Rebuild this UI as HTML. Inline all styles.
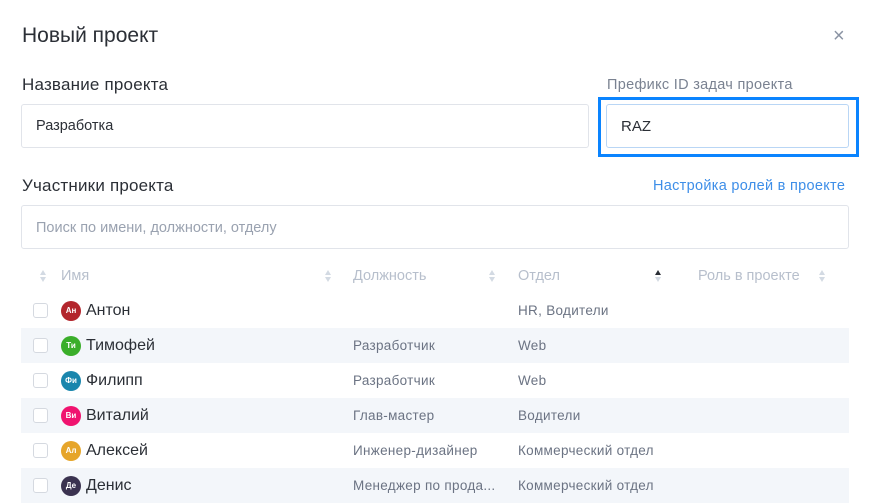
<!DOCTYPE html>
<html><head><meta charset="utf-8"><style>
*{box-sizing:border-box;margin:0;padding:0}
body{width:870px;height:502px;overflow:hidden;background:#fff;font-family:"Liberation Sans","DejaVu Sans",sans-serif;color:#2b2f36;position:relative}
.a{position:absolute;white-space:nowrap}
.inp{position:absolute;border:1px solid #e1e4ea;border-radius:3px;background:#fff}
.row{position:absolute;left:21px;width:828px;height:35px}
.row.s{background:#f3f6fa}
.cb{position:absolute;left:12px;top:10px;width:15px;height:15px;border:1px solid #d5d9e0;border-radius:3px;background:#fff}
.av{position:absolute;left:40px;top:8px;width:20px;height:20px;border-radius:50%;color:#fff;font-size:8px;font-weight:bold;text-align:center;line-height:20px}
.nm{position:absolute;left:65px;top:9px;font-size:16px;color:#2b2f36}
.c{position:absolute;top:10px;font-size:13.5px;letter-spacing:0.3px;color:#6b7383}
.h{position:absolute;top:268px;font-size:14.5px;color:#b7bfcc}
.sort{position:absolute;width:7px;height:12px}
.sort:before,.sort:after{content:"";position:absolute;left:0;border-left:3.5px solid transparent;border-right:3.5px solid transparent}
.sort:before{top:0;border-bottom:5px solid #d3dae3}
.sort:after{top:7px;border-top:5px solid #d3dae3}
.sort.up:before{border-bottom-color:#2b2f36}
</style></head><body>
<div class="a" style="left:22px;top:24px;font-size:21px;color:#2b2f36">Новый проект</div>
<div class="a" style="left:833px;top:25px;font-size:20px;color:#8a93a3">×</div>
<div class="a" style="left:22px;top:75px;font-size:17px;letter-spacing:0.2px">Название проекта</div>
<div class="a" style="left:607px;top:77px;font-size:14.5px;letter-spacing:0.3px;color:#7a8291">Префикс ID задач проекта</div>
<div class="inp" style="left:21px;top:104px;width:568px;height:44px"></div>
<div class="a" style="left:36px;top:118px;font-size:14.5px">Разработка</div>
<div style="position:absolute;left:598px;top:97px;width:261px;height:60px;border:3px solid #0a84ff"></div>
<div class="inp" style="left:606px;top:104px;width:243px;height:44px;border-color:#b9d6f5"></div>
<div class="a" style="left:621px;top:118px;font-size:15px">RAZ</div>
<div class="a" style="left:22px;top:176px;font-size:17px;letter-spacing:0.2px">Участники проекта</div>
<div class="a" style="left:653px;top:178px;font-size:14.5px;letter-spacing:0.3px;color:#3d8ee8">Настройка ролей в проекте</div>
<div class="inp" style="left:21px;top:205px;width:828px;height:44px"></div>
<div class="a" style="left:36px;top:220px;font-size:14.5px;color:#9aa2b0">Поиск по имени, должности, отделу</div>
<div class="sort" style="left:40px;top:270px"></div><div class="h" style="left:61px">Имя</div>
<div class="sort" style="left:325px;top:270px"></div><div class="h" style="left:353px">Должность</div>
<div class="sort" style="left:489px;top:270px"></div><div class="h" style="left:518px">Отдел</div>
<div class="sort up" style="left:655px;top:270px"></div><div class="h" style="left:698px">Роль в проекте</div>
<div class="sort" style="left:819px;top:270px"></div>

<div class="row" style="top:293px"><div class="cb"></div><div class="av" style="background:#b3262d">Ан</div><div class="nm">Антон</div><div class="c" style="left:497px">HR, Водители</div></div>
<div class="row s" style="top:328px"><div class="cb"></div><div class="av" style="background:#3aae2a">Ти</div><div class="nm">Тимофей</div><div class="c" style="left:332px">Разработчик</div><div class="c" style="left:497px">Web</div></div>
<div class="row" style="top:363px"><div class="cb"></div><div class="av" style="background:#1a86ad">Фи</div><div class="nm">Филипп</div><div class="c" style="left:332px">Разработчик</div><div class="c" style="left:497px">Web</div></div>
<div class="row s" style="top:398px"><div class="cb"></div><div class="av" style="background:#f0136f">Ви</div><div class="nm">Виталий</div><div class="c" style="left:332px">Глав-мастер</div><div class="c" style="left:497px">Водители</div></div>
<div class="row" style="top:433px"><div class="cb"></div><div class="av" style="background:#e6a52a">Ал</div><div class="nm">Алексей</div><div class="c" style="left:332px">Инженер-дизайнер</div><div class="c" style="left:497px">Коммерческий отдел</div></div>
<div class="row s" style="top:468px"><div class="cb"></div><div class="av" style="background:#3b3350">Де</div><div class="nm">Денис</div><div class="c" style="left:332px">Менеджер по прода...</div><div class="c" style="left:497px">Коммерческий отдел</div></div>
</body></html>
